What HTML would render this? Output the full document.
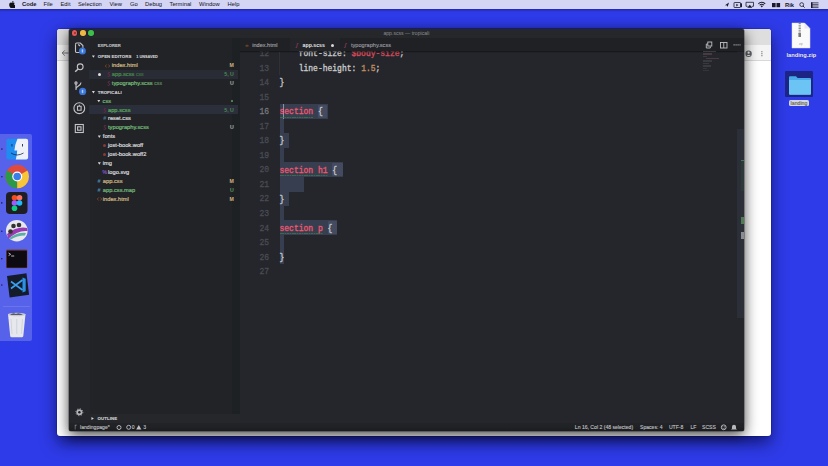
<!DOCTYPE html>
<html><head><meta charset="utf-8">
<style>
*{margin:0;padding:0;box-sizing:border-box}
html,body{width:828px;height:466px;overflow:hidden}
body{position:relative;background:#2e3be8;font-family:"Liberation Sans",sans-serif}
.a{position:absolute}
.mt{position:absolute;top:0;font-size:5.8px;line-height:9px;color:#1a1a2c;white-space:nowrap;-webkit-text-stroke:0.03px}
.ui{position:absolute;white-space:nowrap;font-family:"Liberation Sans",sans-serif;line-height:9px}
.hd{font-size:4.4px;font-weight:bold;letter-spacing:0.05px;-webkit-text-stroke:0.12px}
.hd2{font-size:3.8px;font-weight:bold;color:#cfcfd2;margin-top:0.6px;-webkit-text-stroke:0.1px}
.fn{font-size:5.72px;-webkit-text-stroke:0.22px}
.ic{font-size:5.5px}
.bd{font-size:5.2px;font-weight:bold}
.ico{position:absolute;width:3px;height:3px;border-radius:1.5px}
.arr{position:absolute;width:3px;height:3px;background:#d4d4d8;clip-path:polygon(0 15%,100% 15%,50% 95%)}
.code{position:absolute;white-space:pre;font-family:"Liberation Mono",monospace;font-size:8px;-webkit-text-stroke:0.3px;transform:scaleY(1.14);transform-origin:0 9.4px;line-height:14.55px;color:#c9cacc}
.ln{position:absolute;font-family:"Liberation Mono",monospace;font-size:8px;line-height:14.55px;color:#4a4c54;-webkit-text-stroke:0.25px;transform:scaleY(1.12);transform-origin:0 8.7px;text-align:right;width:20px}
.sel{position:absolute;background:#373e50}
.st{position:absolute;white-space:nowrap;font-size:5.1px;line-height:8px;color:#c4c4c8;-webkit-text-stroke:0.1px}
</style></head><body>
<div class="a" style="left:0;top:0;width:828px;height:9px;background:#d4d5f4"></div>
<div class="a" style="left:0;top:9px;width:828px;height:3px;background:linear-gradient(#2226a8,#2e3be8)"></div>
<svg class="a" style="left:8.5px;top:1.2px" width="6" height="7" viewBox="0 0 17 20"><path fill="#111" d="M14.1 10.6c0-2.6 2.1-3.8 2.2-3.9-1.2-1.8-3.100-2-3.700-2.100-1.600-.2-3.100.9-3.900.9-.8 0-2-.9-3.400-.9C3.500 4.700.5 6.700.5 11c0 1.300.2 2.700.7 4 .7 1.800 3.100 6.200 5.600 6.100 1.300 0 2.200-.9 3.900-.9 1.700 0 2.500.9 3.900.9 2.500 0 4.600-4 5.200-5.800-3.200-1.500-3-4.500-3-4.700zM11.500 3.100c1.300-1.500 1.200-2.900 1.100-3.100-1.200.1-2.500.8-3.300 1.700-.9 1-1.300 2.200-1.200 3.400 1.300.1 2.500-.6 3.400-2z"/></svg>
<div class="mt" style="left:22px;font-weight:bold;">Code</div>
<div class="mt" style="left:43.5px;">File</div>
<div class="mt" style="left:60.5px;">Edit</div>
<div class="mt" style="left:78px;">Selection</div>
<div class="mt" style="left:109.5px;">View</div>
<div class="mt" style="left:130px;">Go</div>
<div class="mt" style="left:145px;">Debug</div>
<div class="mt" style="left:169.5px;">Terminal</div>
<div class="mt" style="left:199px;">Window</div>
<div class="mt" style="left:227.5px;">Help</div>
<div class="mt" style="left:785px;top:.6px;font-weight:bold">Rik</div>
<div class="a" style="left:0;top:134px;width:32px;height:207px;background:#5762ea;border-radius:0 2px 2px 0"></div>
<div class="a" style="left:57px;top:29.3px;width:713.5px;height:407.2px;background:#fff;border-radius:3px;box-shadow:0 0 0 .5px rgba(0,0,40,.3),0 7px 16px rgba(0,0,40,.6)"></div>
<div class="a" style="left:57px;top:29.3px;width:713.5px;height:15.7px;background:#dedede;border-radius:3px 3px 0 0"></div>
<div class="a" style="left:57px;top:45px;width:713.5px;height:16px;background:#f4f4f4;border-bottom:1px solid #d8d8d8"></div>
<svg class="a" style="left:60px;top:48px" width="10" height="10" viewBox="0 0 10 10"><path d="M8.5 5 H2.2 M4.8 2.4 L2.2 5 L4.8 7.6" fill="none" stroke="#6a6a6a" stroke-width=".9"/></svg>
<svg class="a" style="left:745px;top:49.5px" width="20" height="8" viewBox="0 0 20 8"><circle cx="3.6" cy="3.7" r="3.2" fill="#5f6368"/><circle cx="3.6" cy="2.7" r="1.1" fill="#f4f4f4"/><path d="M1.6 5.9 a2.2 1.6 0 0 1 4 0" fill="#f4f4f4"/>
<circle cx="16.9" cy="1.7" r=".6" fill="#6a6a6a"/><circle cx="16.9" cy="3.7" r=".6" fill="#6a6a6a"/><circle cx="16.9" cy="5.7" r=".6" fill="#6a6a6a"/></svg>
<svg class="a" style="left:790px;top:22px" width="22" height="27" viewBox="0 0 22 27">
<path d="M2 1 h12.5 l5.5 5.5 v19.5 h-18z" fill="#fafafa" stroke="#d8d8e0" stroke-width=".5"/>
<path d="M14.5 1 v5.5 h5.5" fill="#e8e8ee"/>
<path d="M9.7 1 v11" stroke="#8a8a8a" stroke-width="2.2" stroke-dasharray="1 .7"/>
<rect x="8.4" y="11" width="2.6" height="4" rx=".6" fill="#7a7a7a"/>
<text x="10.8" y="23" font-size="3" fill="#9a9a9a" text-anchor="middle" font-family="Liberation Sans">zip</text>
</svg>
<div class="ui" style="left:786.5px;top:50.5px;font-size:5.7px;line-height:8px;color:#f2f2ff;font-weight:bold;text-shadow:0 0 1px rgba(0,0,60,.6)">landing.zip</div>
<div class="a" style="left:784.8px;top:71.3px;width:28px;height:25.6px;background:#1c2484;border-radius:1px"></div>
<svg class="a" style="left:787.5px;top:74.5px" width="24" height="20" viewBox="0 0 24 20">
<path d="M1 2.2 q0-1 1-1 h6 l1.6 1.8 h12.4 q1 0 1 1 v14.6 q0 1 -1 1 h-20 q-1 0 -1-1z" fill="#48a8e8"/>
<path d="M1 5 h22 v13.8 q0 1-1 1 h-20 q-1 0-1-1z" fill="#6cc4f4"/>
</svg>
<div class="a" style="left:789.2px;top:100.3px;width:19.8px;height:6.2px;background:#d4d6ea;border-radius:1.5px"></div>
<div class="ui" style="left:790.6px;top:99.4px;font-size:5.2px;line-height:8px;color:#6a6a50;-webkit-text-stroke:.15px">landing</div>
<svg class="a" style="left:722px;top:1px" width="100" height="8" viewBox="0 0 100 8"><g fill="#1a1a2a">
<path d="M3 4.3 L7 1.5 L5.6 6 L5 4.6z"/>
<rect x="12" y="1.5" width="6.5" height="5" rx=".5" fill="none" stroke="#1a1a2a" stroke-width=".8"/><path d="M14.3 2.8 v2.6 l2 -1.3z"/><path d="M18.5 3 l1.5-1 v4.6 l-1.5-1z"/>
<path d="M24 1.3 h7.5 v4 h-1.6 M25.6 5.3 h-1.6 v-4" fill="none" stroke="#1a1a2a" stroke-width=".8"/><path d="M25.2 6.8 l2.6-3 l2.6 3z"/>
<path d="M36 2.6 a5 5 0 0 1 7.6 0 l-.7.7 a4 4 0 0 0 -6.2 0z M37.3 3.9 a3.2 3.2 0 0 1 5 0 l-.7.7 a2.2 2.2 0 0 0 -3.6 0z M38.6 5.1 a1.4 1.4 0 0 1 2.4 0 l-1.2 1.4z"/>
<rect x="50" y="2" width="3.6" height="4.2"/><rect x="54.5" y="2" width="3.6" height="4.2"/>
<circle cx="79.7" cy="3.6" r="1.9" fill="none" stroke="#1a1a2a" stroke-width=".8"/><path d="M81 5 l1.6 1.6" stroke="#1a1a2a" stroke-width=".9"/>
<path d="M89 1.8 h7.5 M89 3.4 h7.5 M89 5 h7.5 M89 6.6 h7.5" stroke="#1a1a2a" stroke-width=".7"/><rect x="89" y="1.4" width="1.5" height="5.6"/>
</g></svg>
<svg class="a" style="left:0;top:134px" width="32" height="207" viewBox="0 0 32 207">
<g fill="#1c1f5a"><circle cx="1.9" cy="15.1" r=".8"/><circle cx="1.9" cy="42.8" r=".8"/><circle cx="1.8" cy="68.9" r=".8"/><circle cx="1.8" cy="97.2" r=".8"/><circle cx="1.8" cy="124.7" r=".8"/><circle cx="1.8" cy="151" r=".8"/></g>
<!-- finder -->
<rect x="6.4" y="4.7" width="21.7" height="20.9" rx="2" fill="#1e8cf0"/>
<path d="M17.5 4.7 h8.6 q2 0 2 2 v16.9 q0 2 -2 2 h-10.3 q1.2-4 1.4-9 h-2.8 q.4-6 3.1-11.9z" fill="#eef2f8"/>
<path d="M11 19 q6 4 12.5 0" fill="none" stroke="#1a2a50" stroke-width=".8"/><rect x="11.5" y="10" width=".9" height="2.5" fill="#1a2a50"/><rect x="22" y="10" width=".9" height="2.5" fill="#1a2a50"/>
<!-- chrome -->
<circle cx="17.2" cy="42.5" r="11.8" fill="#de4a3c"/>
<path d="M17.2 42.5 L7 48.4 A11.8 11.8 0 0 0 17.2 54.3z" fill="#2a9a4a"/>
<path d="M17.2 42.5 L7 48.4 A11.8 11.8 0 0 1 7.1 36.6z" fill="#2a9a4a"/>
<path d="M17.2 42.5 L27.4 36.6 A11.8 11.8 0 0 1 17.2 54.3z" fill="#f6c53a"/>
<circle cx="17.2" cy="42.5" r="5" fill="#fff"/><circle cx="17.2" cy="42.5" r="3.8" fill="#3a7ee8"/>
<!-- figma -->
<rect x="6" y="58" width="21.5" height="22" rx="4" fill="#1e1e24"/>
<circle cx="14.5" cy="63.8" r="2.8" fill="#f24e1e"/><circle cx="19.5" cy="63.8" r="2.8" fill="#ff7262"/>
<circle cx="14.5" cy="69" r="2.8" fill="#a259ff"/><circle cx="19.5" cy="69" r="2.8" fill="#1abcfe"/>
<circle cx="14.5" cy="74.2" r="2.8" fill="#0acf83"/>
<!-- motion -->
<circle cx="16.8" cy="96.7" r="10.8" fill="#e8e8ec"/>
<path d="M7 100 q10-8 20-6 l.5 3 q-10-1 -19 8z" fill="#9a3ab0"/>
<path d="M9 104 q9-6 17-5 l-1 2.5 q-8 0 -14 4z" fill="#5ab0a8"/>
<circle cx="13.5" cy="92" r="2.3" fill="#333"/><circle cx="19" cy="91" r="2.3" fill="#333"/><circle cx="10.5" cy="97.5" r="2.3" fill="#333"/>
<!-- terminal -->
<rect x="6" y="115.3" width="21.5" height="18.9" rx="1.5" fill="#7a4a5a"/>
<rect x="6.6" y="116.5" width="20.3" height="17.2" fill="#0e0a12"/>
<path d="M8.6 119 l2 1.3 l-2 1.3" fill="none" stroke="#e8e8e8" stroke-width=".8"/><path d="M11.2 122 h3" stroke="#e8e8e8" stroke-width=".8"/>
<!-- vscode -->
<path d="M7 142 l19.5 -2.8 l2.6 21.5 l-19.5 2.8z" fill="#141c2c"/>
<path d="M22.5 143.5 l3.2 1.2 v12.6 l-3.2 1.2z" fill="#2a90e8"/>
<path d="M11 147.5 l11.5 8.5 M11 154.5 l11.5 -8.5" stroke="#3aa0f0" stroke-width="1.6"/>
<!-- separator -->
<rect x="3" y="172" width="27" height=".6" fill="#7a80e8"/>
<!-- trash -->
<path d="M8 180 h17.5 l-2.2 22 q-.3 1.2 -1.5 1.2 h-10.1 q-1.2 0 -1.5-1.2z" fill="#e6e8ee"/>
<ellipse cx="16.75" cy="180.5" rx="8.8" ry="1.8" fill="#c8cad2"/><path d="M10 181 q3-3 6-1 q3-2 7 1z" fill="#5a5a62"/>
<path d="M11 185 l1 15 M16.75 185 v15 M22.5 185 l-1 15" stroke="#c4c6ce" stroke-width=".6"/>
</svg>
<div class="a" style="left:69.2px;top:29.3px;width:674.6px;height:401.7px;background:#25272a;border-radius:2px;box-shadow:0 0 0 .5px rgba(0,0,0,.5),0 4px 14px rgba(0,0,0,.75)"></div>
<div class="a" style="left:72.0px;top:30.4px;width:5.4px;height:5.4px;border-radius:2.7px;background:#e25a58;box-shadow:0 0 0 .3px rgba(0,0,0,.3)"></div>
<div class="a" style="left:80.2px;top:30.4px;width:5.4px;height:5.4px;border-radius:2.7px;background:#eeb844;box-shadow:0 0 0 .3px rgba(0,0,0,.3)"></div>
<div class="a" style="left:88.3px;top:30.4px;width:5.4px;height:5.4px;border-radius:2.7px;background:#3ebf4c;box-shadow:0 0 0 .3px rgba(0,0,0,.3)"></div>
<div class="a" style="left:73.7px;top:32.1px;width:2px;height:2px;border-radius:1px;background:#a02a2a"></div>
<div class="a" style="left:69.2px;top:37.5px;width:21px;height:385.5px;background:#25262b"></div>
<div class="a" style="left:89.5px;top:37.5px;width:6px;height:376px;background:#222327"></div>
<div class="a" style="left:95.5px;top:37.5px;width:136.7px;height:376px;background:#212326"></div>
<div class="a" style="left:232.2px;top:37.5px;width:7.8px;height:376px;background:#1e2124"></div>
<div class="a" style="left:240px;top:37.5px;width:503.8px;height:385.5px;background:#25262b"></div>
<div class="a" style="left:69.2px;top:423px;width:674.6px;height:8px;background:linear-gradient(#212326 0,#202225 50%,#1b1c1f 100%);border-radius:0 0 2px 2px"></div>
<div class="a" style="left:89px;top:69.8px;width:149px;height:8.9px;background:#292b35"></div>
<div class="a" style="left:89px;top:105.4px;width:149px;height:8.9px;background:#2b2e3b"></div>
<div class="a" style="left:98.3px;top:72.7px;width:3.2px;height:3.2px;border-radius:1.6px;background:#e0e0e4"></div>
<div class="ui" style="left:97.7px;top:40.8px;font-size:4.15px;font-weight:bold;color:#c4c4c8;letter-spacing:0.05px;-webkit-text-stroke:0.1px">EXPLORER</div>
<div class="ui hd" style="left:97.7px;top:52.1px;color:#cfcfd2">OPEN EDITORS</div>
<div class="arr" style="left:91.9px;top:55.0px"></div>
<div class="ui hd2" style="left:136.3px;top:52.1px">1 UNSAVED</div>
<div class="ui fn" style="left:111.8px;top:61.0px;color:#cdb583">index.html</div>
<svg class="a" style="left:104.7px;top:63.5px" width="5" height="4" viewBox="0 0 5 4"><path d="M1.6 .5 L.3 2 L1.6 3.5 M3.4 .5 L4.7 2 L3.4 3.5" fill="none" stroke="#8a4a2a" stroke-width=".8"/></svg>
<div class="ui bd" style="right:594.2px;top:61.0px;color:#cdb583">M</div>
<div class="ui fn" style="left:111.8px;top:69.9px;color:#4a8c4e">app.scss <span style="font-size:5.1px;opacity:.65">css</span></div>
<svg class="a" style="left:106.5px;top:71.9px" width="4" height="5" viewBox="0 0 4 5"><path d="M3.2 .8 Q2 .2 1.2 .9 Q.5 1.7 2 2.4 Q3.4 3.1 2.6 4 Q1.8 4.7 .6 4.1" fill="none" stroke="#6a2d4a" stroke-width="1"/></svg>
<div class="ui bd" style="right:594.2px;top:69.9px;color:#4f8a55">5, U</div>
<div class="ui fn" style="left:111.8px;top:78.8px;color:#73b878">typography.scss <span style="font-size:5.1px;opacity:.65">css</span></div>
<svg class="a" style="left:106.5px;top:80.8px" width="4" height="5" viewBox="0 0 4 5"><path d="M3.2 .8 Q2 .2 1.2 .9 Q.5 1.7 2 2.4 Q3.4 3.1 2.6 4 Q1.8 4.7 .6 4.1" fill="none" stroke="#6a2d4a" stroke-width="1"/></svg>
<div class="ui bd" style="right:594.2px;top:78.8px;color:#aeb7ae">U</div>
<div class="ui hd" style="left:97.7px;top:87.7px;color:#cfcfd2">TROPICALI</div>
<div class="arr" style="left:91.9px;top:90.6px"></div>
<div class="ui fn" style="left:102.6px;top:96.6px;color:#73b878">css</div>
<div class="arr" style="left:97.3px;top:99.5px"></div>
<div class="a" style="left:230.5px;top:100.1px;width:2px;height:2px;border-radius:1px;background:#5f9c62"></div>
<div class="ui fn" style="left:108px;top:105.5px;color:#5aa85c">app.scss</div>
<svg class="a" style="left:103.2px;top:107.5px" width="4" height="5" viewBox="0 0 4 5"><path d="M3.2 .8 Q2 .2 1.2 .9 Q.5 1.7 2 2.4 Q3.4 3.1 2.6 4 Q1.8 4.7 .6 4.1" fill="none" stroke="#6a2d4a" stroke-width="1"/></svg>
<div class="ui bd" style="right:594.2px;top:105.5px;color:#4f8a55">5, U</div>
<div class="ui fn" style="left:108px;top:114.4px;color:#d6d6d8">reset.css</div>
<div class="ui ic" style="left:103.2px;top:114.4px;color:#4c7a9c;font-weight:bold">#</div>
<div class="ui fn" style="left:108px;top:123.3px;color:#73b878">typography.scss</div>
<svg class="a" style="left:103.2px;top:125.3px" width="4" height="5" viewBox="0 0 4 5"><path d="M3.2 .8 Q2 .2 1.2 .9 Q.5 1.7 2 2.4 Q3.4 3.1 2.6 4 Q1.8 4.7 .6 4.1" fill="none" stroke="#6a2d4a" stroke-width="1"/></svg>
<div class="ui bd" style="right:594.2px;top:123.3px;color:#aeb7ae">U</div>
<div class="ui fn" style="left:102.8px;top:132.2px;color:#d6d6d8">fonts</div>
<div class="arr" style="left:97.8px;top:135.1px"></div>
<div class="ui fn" style="left:108px;top:141.1px;color:#d6d6d8">jost-book.woff</div>
<div class="ico" style="left:103.4px;top:144.1px;background:#8a3a36"></div>
<div class="ui fn" style="left:108px;top:150.0px;color:#d6d6d8">jost-book.woff2</div>
<div class="ico" style="left:103.4px;top:153.0px;background:#8a3a36"></div>
<div class="ui fn" style="left:102.8px;top:158.9px;color:#d6d6d8">img</div>
<div class="arr" style="left:97.8px;top:161.8px"></div>
<div class="ui fn" style="left:108px;top:167.8px;color:#d6d6d8">logo.svg</div>
<div class="ui ic" style="left:102.2px;top:167.8px;color:#8a55c8;font-weight:bold">%</div>
<div class="ui fn" style="left:102.8px;top:176.7px;color:#cdb583">app.css</div>
<div class="ui ic" style="left:97.6px;top:176.7px;color:#4c8ab8;font-weight:bold">#</div>
<div class="ui bd" style="right:594.2px;top:176.7px;color:#cdb583">M</div>
<div class="ui fn" style="left:102.8px;top:185.6px;color:#73b878">app.css.map</div>
<div class="ui ic" style="left:97.6px;top:185.6px;color:#4c8ab8;font-weight:bold">#</div>
<div class="ui bd" style="right:594.2px;top:185.6px;color:#5f9c62">U</div>
<div class="ui fn" style="left:102.8px;top:194.5px;color:#cdb583">index.html</div>
<svg class="a" style="left:96.5px;top:197.0px" width="5" height="4" viewBox="0 0 5 4"><path d="M1.6 .5 L.3 2 L1.6 3.5 M3.4 .5 L4.7 2 L3.4 3.5" fill="none" stroke="#8a4a2a" stroke-width=".8"/></svg>
<div class="ui bd" style="right:594.2px;top:194.5px;color:#cdb583">M</div>
<svg class="a" style="left:69px;top:37px" width="20" height="100" viewBox="0 0 20 100">
<g fill="none" stroke="#c4c4c8" stroke-width="1.1">
<path d="M6.5 7.2 q0-1.2 1.2-1.2 h3.6 l2.6 2.6 v5.8"/><path d="M6.5 7.2 v7.4 q0 .9 .9 .9 h4.5"/><path d="M9.3 7.4 l1.6 1.6" stroke-width="1.3"/>
<circle cx="11.2" cy="29.8" r="2.9"/><path d="M9.1 31.9 L6.2 34.8" stroke-width="1.4"/>
<path d="M7 46.5 v6.5 M7 52 c0-3 5-3 5-6.5" /><circle cx="7" cy="46" r="1.1"/>
<circle cx="10.3" cy="71.2" r="5.4"/><path d="M8.5 69.2 h3.6 v4 h-3.6z M10.3 67.8 v1.4"/>
<rect x="6.3" y="87.5" width="8" height="8"/><rect x="8.6" y="89.8" width="3.4" height="3.4"/>
</g>
<circle cx="13.4" cy="13.9" r="3.5" fill="#3a74d4"/><circle cx="13.4" cy="13.9" r="2" fill="#4a8ae6"/><path d="M13.4 12.4 v3" stroke="#dce8ff" stroke-width=".8"/>
<circle cx="13.6" cy="54.4" r="3.6" fill="#3a74d4"/><circle cx="13.6" cy="54.4" r="2" fill="#4a8ae6"/><path d="M13.6 52.9 v3" stroke="#dce8ff" stroke-width=".8"/>
</svg>
<svg class="a" style="left:74px;top:407px" width="11" height="11" viewBox="0 0 11 11"><circle cx="5.4" cy="5.2" r="3.5" fill="none" stroke="#a8a8ac" stroke-width="1" stroke-dasharray="1.1 1.65"/><circle cx="5.4" cy="5.2" r="3" fill="#b4b4b8"/><circle cx="5.4" cy="5.2" r="1.2" fill="#1c1d20"/></svg>
<div class="arr" style="left:91.3px;top:416.5px;transform:rotate(-90deg)"></div>
<div class="ui hd" style="left:97.6px;top:413.5px;color:#cfcfd2">OUTLINE</div>
<div class="a" style="left:240px;top:37.5px;width:503.8px;height:13px;background:#1f2124"></div>
<div class="a" style="left:289.5px;top:37.5px;width:50px;height:13px;background:#232529"></div>
<div class="a" style="left:240px;top:50.5px;width:503.8px;height:1px;background:#1c1d20"></div>
<div class="ui" style="left:245.2px;top:40.7px;font-size:5px;color:#c96a2c">‹›</div>
<div class="ui" style="left:252.3px;top:40.7px;font-size:5.55px;color:#a4a4a8;-webkit-text-stroke:0.12px">index.html</div>
<div class="ui" style="left:296px;top:40.7px;font-size:5.5px;color:#8e3a5c;font-style:italic;font-weight:bold">ʃ</div>
<div class="ui" style="left:302.6px;top:40.7px;font-size:5.2px;color:#e6e6e8;font-weight:bold">app.scss</div>
<div class="a" style="left:331px;top:43.5px;width:3px;height:3px;border-radius:1.5px;background:#d8d8dc"></div>
<div class="ui" style="left:344.5px;top:40.7px;font-size:5.5px;color:#8e3a5c;font-style:italic;font-weight:bold">ʃ</div>
<div class="ui" style="left:351px;top:40.7px;font-size:5.6px;color:#9c9ca2;-webkit-text-stroke:0.12px">typography.scss</div>
<div class="ui" style="left:383.4px;top:28.8px;font-size:5.15px;color:#8c8c92">app.scss — tropicali</div>
<svg class="a" style="left:705px;top:41px" width="38" height="8" viewBox="0 0 38 8">
<g fill="none" stroke="#c0c0c4" stroke-width=".9"><rect x="2.8" y="1" width="4" height="4"/><path d="M2.8 3 h-1.5 v4 h4 v-1.5"/>
<rect x="15.5" y="1.5" width="6.5" height="5.5"/><path d="M18.75 1.5 v5.5"/></g>
<path d="M28.5 3.8 h7" stroke="#a0a0a4" stroke-width="1.2" stroke-dasharray="1.2 .8"/>
</svg>
<div class="sel" style="left:279.5px;top:104.00px;width:48.0px;height:14.85px"></div>
<div class="sel" style="left:279.5px;top:118.55px;width:4.8px;height:14.85px"></div>
<div class="sel" style="left:279.5px;top:133.10px;width:9.1px;height:14.85px"></div>
<div class="sel" style="left:279.5px;top:147.65px;width:4.8px;height:14.85px"></div>
<div class="sel" style="left:279.5px;top:162.20px;width:63.4px;height:14.85px"></div>
<div class="sel" style="left:279.5px;top:176.75px;width:24.3px;height:14.85px"></div>
<div class="sel" style="left:279.5px;top:191.30px;width:9.0px;height:14.85px"></div>
<div class="sel" style="left:279.5px;top:205.85px;width:4.8px;height:14.85px"></div>
<div class="sel" style="left:279.5px;top:220.40px;width:57.6px;height:14.85px"></div>
<div class="sel" style="left:279.5px;top:234.95px;width:4.8px;height:14.85px"></div>
<div class="sel" style="left:279.5px;top:249.50px;width:4.9px;height:14.85px"></div>
<div class="a" style="left:317.9px;top:104.50px;width:9.6px;height:13.55px;background:#444b60;border-radius:1px"></div>
<div class="a" style="left:332.3px;top:162.70px;width:10.6px;height:13.55px;background:#444b60;border-radius:1px"></div>
<div class="a" style="left:327.5px;top:220.90px;width:9.6px;height:13.55px;background:#444b60;border-radius:1px"></div>
<div class="a" style="left:283.2px;top:104px;width:0.8px;height:14.6px;background:#8a92a8"></div>
<div class="a" style="left:279.5px;top:116.60px;width:33.6px;height:1px;background:repeating-linear-gradient(90deg,#3a7a50 0 1.6px,rgba(58,122,80,.35) 1.6px 2.4px);opacity:.75"></div>
<div class="a" style="left:279.5px;top:174.80px;width:48px;height:1px;background:repeating-linear-gradient(90deg,#3a7a50 0 1.6px,rgba(58,122,80,.35) 1.6px 2.4px);opacity:.75"></div>
<div class="a" style="left:279.5px;top:233.00px;width:43.2px;height:1px;background:repeating-linear-gradient(90deg,#3a7a50 0 1.6px,rgba(58,122,80,.35) 1.6px 2.4px);opacity:.75"></div>
<div class="a" style="left:240px;top:51.2px;width:460px;height:371.5px;overflow:hidden">
<div class="ln" style="left:9.100000000000012px;top:-4.20px;">12</div>
<div class="code" style="left:39.5px;top:-4.00px">    font-size: <span style="color:#d84a5a">$body-size</span>;</div>
<div class="ln" style="left:9.100000000000012px;top:10.35px;">13</div>
<div class="code" style="left:39.5px;top:10.55px">    line-height: <span style="color:#c48f5c">1.5</span>;</div>
<div class="ln" style="left:9.100000000000012px;top:24.90px;">14</div>
<div class="code" style="left:39.5px;top:25.10px">}</div>
<div class="ln" style="left:9.100000000000012px;top:39.45px;">15</div>
<div class="code" style="left:39.5px;top:39.65px"></div>
<div class="ln" style="left:9.100000000000012px;top:54.00px;color:#76787e;">16</div>
<div class="code" style="left:39.5px;top:54.20px"><span style="color:#f0576e">section</span> {</div>
<div class="ln" style="left:9.100000000000012px;top:68.55px;">17</div>
<div class="code" style="left:39.5px;top:68.75px"></div>
<div class="ln" style="left:9.100000000000012px;top:83.10px;">18</div>
<div class="code" style="left:39.5px;top:83.30px">}</div>
<div class="ln" style="left:9.100000000000012px;top:97.65px;">19</div>
<div class="code" style="left:39.5px;top:97.85px"></div>
<div class="ln" style="left:9.100000000000012px;top:112.20px;">20</div>
<div class="code" style="left:39.5px;top:112.40px"><span style="color:#f0576e">section h1</span> {</div>
<div class="ln" style="left:9.100000000000012px;top:126.75px;">21</div>
<div class="code" style="left:39.5px;top:126.95px"></div>
<div class="ln" style="left:9.100000000000012px;top:141.30px;">22</div>
<div class="code" style="left:39.5px;top:141.50px">}</div>
<div class="ln" style="left:9.100000000000012px;top:155.85px;">23</div>
<div class="code" style="left:39.5px;top:156.05px"></div>
<div class="ln" style="left:9.100000000000012px;top:170.40px;">24</div>
<div class="code" style="left:39.5px;top:170.60px"><span style="color:#f0576e">section p</span> {</div>
<div class="ln" style="left:9.100000000000012px;top:184.95px;">25</div>
<div class="code" style="left:39.5px;top:185.15px"></div>
<div class="ln" style="left:9.100000000000012px;top:199.50px;">26</div>
<div class="code" style="left:39.5px;top:199.70px">}</div>
<div class="ln" style="left:9.100000000000012px;top:214.05px;">27</div>
<div class="code" style="left:39.5px;top:214.25px"></div>
</div>
<div class="a" style="left:240px;top:51.2px;width:497px;height:1.5px;background:linear-gradient(rgba(20,21,24,.8),rgba(20,21,24,0))"></div>
<div class="a" style="left:279.2px;top:51.5px;width:0.7px;height:23px;background:#303137"></div>
<div class="a" style="left:703px;top:50.8px;width:13px;height:1.4px;background:#5a5b62;opacity:.55"></div>
<div class="a" style="left:703px;top:53.2px;width:9px;height:1.4px;background:#6a4a55;opacity:.55"></div>
<div class="a" style="left:703px;top:55.6px;width:4px;height:1.4px;background:#4a4b52;opacity:.55"></div>
<div class="a" style="left:706px;top:58px;width:13px;height:1.4px;background:#6a4a55;opacity:.55"></div>
<div class="a" style="left:703px;top:60.4px;width:9px;height:1.4px;background:#4a4b52;opacity:.55"></div>
<div class="a" style="left:703px;top:62.8px;width:6px;height:1.4px;background:#4a4b52;opacity:.55"></div>
<div class="a" style="left:703px;top:65.2px;width:8px;height:1.4px;background:#4a4b52;opacity:.55"></div>
<div class="a" style="left:703px;top:67.6px;width:4px;height:1.4px;background:#404148;opacity:.55"></div>
<div class="a" style="left:703px;top:70px;width:6px;height:1.4px;background:#404148;opacity:.55"></div>
<div class="a" style="left:736.8px;top:129px;width:7px;height:188.5px;background:#2c2e38"></div>
<div class="a" style="left:740.5px;top:159.5px;width:3.3px;height:1.6px;background:#3f7a4c"></div>
<div class="a" style="left:741px;top:161px;width:2.8px;height:30px;background:#2f5a3c;opacity:.25"></div>
<div class="a" style="left:740.5px;top:217px;width:3px;height:6.5px;background:#4f7a56"></div>
<div class="a" style="left:740.5px;top:231.5px;width:3px;height:7.5px;background:#8a8c92"></div>
<div class="st" style="left:74px;top:423.2px;font-size:5.3px">ᚴ</div>
<div class="st" style="left:80px;top:423.2px">landingpage*</div>
<svg class="a" style="left:115px;top:424px" width="35" height="7" viewBox="0 0 35 7"><g fill="none" stroke="#c0c0c4" stroke-width=".9">
<path d="M2 3.5 a2 2 0 1 1 4 0"/><path d="M6 3.5 a2 2 0 1 1 -4 0"/>
<circle cx="13.7" cy="3.3" r="2"/></g><path d="M21.2 5.6 l2.6 -4.6 l2.6 4.6z" fill="#c0c0c4"/></svg>
<div class="st" style="left:131.8px;top:423.2px">0</div>
<div class="st" style="left:143.2px;top:423.2px">3</div>
<div class="st" style="left:574.8px;top:423.2px">Ln 16, Col 2 (48 selected)</div>
<div class="st" style="left:640px;top:423.2px">Spaces: 4</div>
<div class="st" style="left:668.9px;top:423.2px">UTF-8</div>
<div class="st" style="left:690.4px;top:423.2px">LF</div>
<div class="st" style="left:702px;top:423.2px">SCSS</div>
<svg class="a" style="left:719px;top:424px" width="20" height="7" viewBox="0 0 20 7"><circle cx="4.7" cy="3.3" r="2.4" fill="none" stroke="#b8b8bc" stroke-width="1"/><circle cx="3.9" cy="2.7" r=".45" fill="#b8b8bc"/><circle cx="5.5" cy="2.7" r=".45" fill="#b8b8bc"/><path d="M3.6 4 q1.1 1 2.2 0" fill="none" stroke="#b8b8bc" stroke-width=".6"/><path d="M14.5 5.6 h6 l-1 -1 v-1.8 a2 2 0 0 0 -4 0 v1.8z" fill="#b8b8bc" transform="translate(-2.5 0)"/></svg>
</body></html>
